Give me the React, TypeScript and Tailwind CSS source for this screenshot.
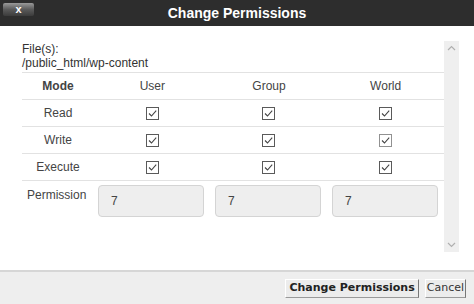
import React from 'react'

const Check = ({ focused = false }: { focused?: boolean }) => (
  <span className="inline-flex">
    <svg width="13" height="13" viewBox="0 0 13 13">
      <rect
        x="0.5"
        y="0.5"
        width="12"
        height="12"
        fill="#fff"
        stroke={focused ? '#222' : '#5a5a5a'}
        strokeDasharray={focused ? '1 1' : undefined}
      />
      <path d="M3 6.5 L5.5 9 L10.2 3.6" fill="none" stroke="#444" strokeWidth="1.1" />
    </svg>
  </span>
)

const rows = ['Read', 'Write', 'Execute']

const App = () => {
  return (
    <div className="w-[474px] h-[304px] flex flex-col bg-white font-['Liberation_Sans',Arial,sans-serif] text-[12px] text-[#333] overflow-hidden">
      <div className="relative h-[26px] shrink-0 bg-[#2d2d2d] flex items-center justify-center">
        <button className="absolute left-[3px] top-[3px] w-[31px] h-[13px] rounded-[2px] bg-gradient-to-b from-[#9a9a9a] via-[#5a5a5a] to-[#3c3c3c] flex items-center justify-center text-white font-bold text-[11px] leading-none">
          x
        </button>
        <h1 className="text-white font-bold text-[14px] leading-none">Change Permissions</h1>
      </div>

      <div className="flex-1 flex">
        <div className="w-[422px] ml-[22px] pt-[16px]">
          <div className="leading-[14px]">File(s):</div>
          <div className="leading-[14px]">/public_html/wp-content</div>
          <div className="mt-[2px] border-t border-[#e2e2e2]">
            <div className="grid grid-cols-[72px_1fr_1fr_1fr] h-[27px] border-b border-[#e2e2e2] items-center text-center text-[#444]">
              <span className="font-bold">Mode</span>
              <span>User</span>
              <span>Group</span>
              <span>World</span>
            </div>
            {rows.map((r) => (
              <div key={r} className="grid grid-cols-[72px_1fr_1fr_1fr] h-[27px] border-b border-[#e2e2e2] items-center text-center text-[#444]">
                <span>{r}</span>
                <span className="flex justify-center"><Check /></span>
                <span className="flex justify-center"><Check /></span>
                <span className="flex justify-center"><Check focused={r === 'Write'} /></span>
              </div>
            ))}
          </div>
          <div className="flex pt-[4px]">
            <div className="w-[76px] pl-[5px] pt-[1px] text-[#444]">Permission</div>
            <div className="flex gap-[11px]">
              {[0, 1, 2].map((i) => (
                <div key={i} className="w-[106px] h-[32px] rounded-[4px] border border-[#d4d4d4] bg-[#eeeeee] flex items-center pl-[12px] text-[#444]">
                  7
                </div>
              ))}
            </div>
          </div>
        </div>
        <div className="w-[15px] mt-[15px] h-[211px] bg-[#efefef] flex flex-col items-center justify-between py-[4px]">
          <svg width="9" height="6" viewBox="0 0 9 6"><path d="M1 5 L4.5 1.5 L8 5" fill="none" stroke="#b0b0b0" strokeWidth="1.2" /></svg>
          <svg width="9" height="6" viewBox="0 0 9 6"><path d="M1 1 L4.5 4.5 L8 1" fill="none" stroke="#b0b0b0" strokeWidth="1.2" /></svg>
        </div>
      </div>

      <div className="h-[34px] shrink-0 border-t-2 border-[#d6d6d6] bg-[#eeeeee] flex items-center justify-end pr-[8px] gap-[6px] font-['DejaVu_Sans',Verdana,sans-serif] text-[11px] text-[#222]">
        <button className="h-[19px] px-[3px] bg-[#ececec] border border-t-white border-l-white border-r-[#777] border-b-[#999] font-bold">
          Change Permissions
        </button>
        <button className="h-[19px] px-[1px] bg-[#ececec] border border-t-white border-l-white border-r-[#777] border-b-[#999] text-[#333]">
          Cancel
        </button>
      </div>
    </div>
  )
}

export default App
